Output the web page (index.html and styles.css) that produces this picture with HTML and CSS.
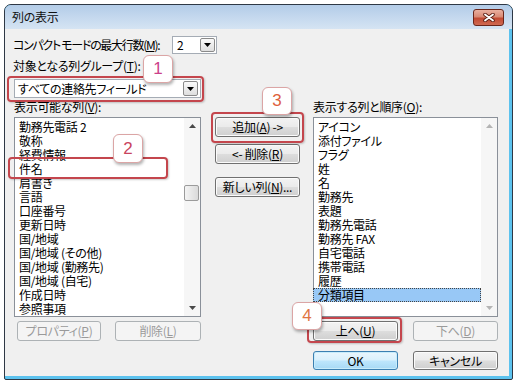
FILE: index.html
```html
<!DOCTYPE html>
<html lang="ja">
<head>
  <meta charset="UTF-8" />
  <title>列の表示</title>
  <link rel="stylesheet" href="styles.css">
</head>
<body>
  <div class="window">
    <div class="titlebar">
      <span class="title">列の表示</span>
      <span class="close">
        <svg width="12" height="9" viewBox="0 0 12 9">
          <path d="M2 1.5 L10 7.5 M10 1.5 L2 7.5" stroke="#5b1f14" stroke-width="3.6" stroke-linecap="round"/>
          <path d="M2 1.5 L10 7.5 M10 1.5 L2 7.5" stroke="#fff" stroke-width="1.8" stroke-linecap="round"/>
        </svg>
      </span>
    </div>

    <div class="client">
      <div class="row-compact">
        <span class="lbl lbl-compact">コンパクト モードの最大行数(<u>M</u>):</span>
        <div class="combo combo-small">
          <span class="combo-text">2</span>
          <span class="combo-btn"><svg width="7" height="4" viewBox="0 0 7 4"><polygon points="0,0 7,0 3.5,4" fill="#000"/></svg></span>
        </div>
      </div>
      <div class="lbl lbl-group">対象となる列グループ(<u>T</u>):</div>
      <div class="combo combo-wide">
        <span class="combo-text">すべての連絡先フィールド</span>
        <span class="combo-btn"><svg width="7" height="4" viewBox="0 0 7 4"><polygon points="0,0 7,0 3.5,4" fill="#000"/></svg></span>
      </div>

      <div class="panes">
        <div class="lbl">表示可能な列(<u>V</u>):</div>
        <div></div>
        <div class="lbl">表示する列と順序(<u>O</u>):</div>

        <div class="listbox">
          <ul class="items">
            <li>勤務先電話 2</li>
            <li>敬称</li>
            <li>経費情報</li>
            <li>件名</li>
            <li>肩書き</li>
            <li>言語</li>
            <li>口座番号</li>
            <li>更新日時</li>
            <li>国/地域</li>
            <li>国/地域 (その他)</li>
            <li>国/地域 (勤務先)</li>
            <li>国/地域 (自宅)</li>
            <li>作成日時</li>
            <li>参照事項</li>
          </ul>
          <div class="vscroll">
            <span class="arrow"><svg width="7" height="4" viewBox="0 0 7 4"><polygon points="0,4 7,4 3.5,0" fill="#4a4a4a"/></svg></span>
            <div class="track"><span class="thumb"></span></div>
            <span class="arrow"><svg width="7" height="4" viewBox="0 0 7 4"><polygon points="0,0 7,0 3.5,4" fill="#4a4a4a"/></svg></span>
          </div>
        </div>

        <div class="mid-buttons">
          <button class="btn btn-add">追加(<u>A</u>) -&gt;</button>
          <button class="btn btn-remove">&lt;- 削除(<u>R</u>)</button>
          <button class="btn btn-new">新しい列(<u>N</u>)...</button>
        </div>

        <div class="listbox">
          <ul class="items">
            <li>アイコン</li>
            <li>添付ファイル</li>
            <li>フラグ</li>
            <li>姓</li>
            <li>名</li>
            <li>勤務先</li>
            <li>表題</li>
            <li>勤務先電話</li>
            <li>勤務先 FAX</li>
            <li>自宅電話</li>
            <li>携帯電話</li>
            <li>履歴</li>
            <li class="selected">分類項目</li>
          </ul>
          <div class="vscroll">
            <span class="arrow"><svg width="7" height="4" viewBox="0 0 7 4"><polygon points="0,4 7,4 3.5,0" fill="#b4b4b4"/></svg></span>
            <div class="track"></div>
            <span class="arrow"><svg width="7" height="4" viewBox="0 0 7 4"><polygon points="0,0 7,0 3.5,4" fill="#b4b4b4"/></svg></span>
          </div>
        </div>

        <div class="btn-pair btn-pair-left">
          <button class="btn" disabled>プロパティ(<u>P</u>)</button>
          <button class="btn btn-wide" disabled>削除(<u>L</u>)</button>
        </div>
        <div></div>
        <div class="btn-pair">
          <button class="btn">上へ(<u>U</u>)</button>
          <button class="btn" disabled>下へ(<u>D</u>)</button>
        </div>

        <div></div>
        <div></div>
        <div class="btn-pair btn-pair-ok">
          <button class="btn btn-default">OK</button>
          <button class="btn">キャンセル</button>
        </div>
      </div>
    </div>
  </div>

  <!-- annotation marks drawn over the dialog -->
  <div class="mark mark-1"></div>
  <div class="mark mark-2"></div>
  <div class="mark mark-3"></div>
  <div class="mark mark-4"></div>
  <div class="callout callout-1">1</div>
  <div class="callout callout-2">2</div>
  <div class="callout callout-3">3</div>
  <div class="callout callout-4">4</div>
</body>
</html>
```

FILE: styles.css
```css
html, body {
  margin: 0;
  padding: 0;
}
body {
  position: relative;
  width: 519px;
  height: 383px;
  overflow: hidden;
  background: #fff;
  color: #000;
  font-family: "Noto Sans CJK JP", "Noto Sans", sans-serif;
  font-size: 12px;
  font-feature-settings: "palt";
  letter-spacing: -0.3px;
}
u {
  text-decoration: underline;
  text-underline-offset: 1px;
}

.window {
  margin: 4px 0 0 4px;
  width: 507px;
  height: 374px;
  border: 1px solid #2e3845;
  border-radius: 7px 7px 2px 2px;
  background: #5cc2ee;
  display: flex;
  flex-direction: column;
  overflow: hidden;
}
.titlebar {
  flex: none;
  height: 24px;
  display: flex;
  justify-content: space-between;
  align-items: flex-start;
  background: linear-gradient(#b3cce8, #d5e4f3);
}
.title {
  padding: 4px 0 0 7px;
  line-height: 15px;
  color: #111;
}
.close {
  margin: 4px 8px 0 0;
  width: 31px;
  height: 17px;
  box-sizing: border-box;
  border: 1px solid #6a261b;
  border-radius: 3px;
  background: linear-gradient(#eab0a0 0%, #d98a75 45%, #c24a33 55%, #cf6a52 100%);
  display: flex;
  align-items: center;
  justify-content: center;
}

.client {
  flex: 1;
  margin: 0 3px 3px 0;
  padding: 7px 0 0 9px;
  background: #f0f0f0;
}
.lbl {
  line-height: 14px;
  white-space: nowrap;
}
.row-compact {
  display: flex;
  align-items: center;
  height: 18px;
}
.lbl-compact {
  flex: none;
  width: 158px;
  margin-left: -1px;
  letter-spacing: -1.3px;
}
.lbl-group {
  margin-left: -1px;
  margin-top: 5px;
}

.combo {
  display: flex;
  align-items: stretch;
  box-sizing: border-box;
  padding: 1px;
  background: #fff;
  border: 1px solid #a5acb5;
}
.combo-small {
  flex: none;
  margin-left: 1px;
  width: 45px;
  height: 18px;
}
.combo-wide {
  margin-top: 6px;
  width: 187px;
  height: 19px;
}
.combo-text {
  flex: 1;
  padding-left: 2px;
  line-height: 15px;
  white-space: nowrap;
}
.combo-small .combo-text {
  padding-left: 3px;
  line-height: 14px;
}
.combo-btn {
  width: 15px;
  box-sizing: border-box;
  border: 1px solid #8a8a8a;
  border-radius: 2px;
  background: linear-gradient(#fafafa, #dedede);
  display: flex;
  align-items: center;
  justify-content: center;
}
.combo-wide .combo-btn {
  margin-right: 1px;
}

.panes {
  margin-top: 2px;
  display: grid;
  grid-template-columns: 187px 112px 185px;
}
.listbox {
  margin-top: 3px;
  height: 200px;
  box-sizing: border-box;
  border: 1px solid #8a9099;
  background: #fff;
  display: flex;
}
.items {
  flex: 1;
  margin: 0;
  padding: 2px 0 0 0;
  list-style: none;
}
.items li {
  height: 14px;
  line-height: 14px;
  padding-left: 4px;
  white-space: nowrap;
}
.items li.selected {
  background: #98c8f6;
  outline: 1px dotted #444;
  outline-offset: -1px;
  margin-left: -1px;
  padding-left: 5px;
}
.vscroll {
  width: 16px;
  display: flex;
  flex-direction: column;
  background: #f6f6f6;
}
.arrow {
  height: 16px;
  display: flex;
  align-items: center;
  justify-content: center;
}
.track {
  flex: 1;
}
.thumb {
  display: block;
  margin-top: 51px;
  width: 15px;
  height: 16px;
  box-sizing: border-box;
  border: 1px solid #9b9b9b;
  border-radius: 2px;
  background: linear-gradient(90deg, #f4f4f4, #dadada);
}

.mid-buttons {
  padding: 0 13px 0 14px;
  display: flex;
  flex-direction: column;
}
.btn-add {
  margin-top: 3px;
}
.btn-remove {
  margin-top: 7px;
}
.btn-new {
  margin-top: 13px;
}

.btn {
  width: 85px;
  height: 20px;
  box-sizing: border-box;
  padding: 0;
  border: 1px solid #707070;
  border-radius: 3px;
  background: linear-gradient(#f3f3f3 0%, #ebebeb 48%, #dddddd 52%, #cfcfcf 100%);
  box-shadow: inset 0 0 0 1px #fbfbfb;
  font-family: inherit;
  font-size: 12px;
  font-feature-settings: "palt";
  letter-spacing: -0.3px;
  line-height: 16px;
  color: #000;
  white-space: nowrap;
}
.btn:disabled {
  border-color: #adb2b5;
  background: #f4f4f4;
  box-shadow: none;
  color: #9a9a9a;
}
.btn-default {
  border-color: #3c7fb1;
  background: linear-gradient(#eaf6fd 0%, #d9f0fc 48%, #bee6fd 52%, #a7d9f5 100%);
  box-shadow: inset 0 0 0 1px #c8ecfb;
}
.btn-pair {
  margin-top: 4px;
  display: flex;
  justify-content: space-between;
}
.btn-pair-left {
  padding-left: 3px;
}
.btn-pair-left .btn {
  width: 84px;
}
.btn-pair-left .btn-wide {
  width: 86px;
}
.btn-pair-ok {
  margin-top: 10px;
}
.btn-pair-ok .btn {
  height: 19px;
}

/* annotations */
.mark {
  position: absolute;
  box-sizing: border-box;
  border: 2px solid #c4464d;
  border-radius: 4px;
  box-shadow: 1px 1px 2px rgba(0, 0, 0, 0.2);
}
.mark-1 { left: 7px; top: 76px; width: 197px; height: 26px; }
.mark-2 { left: 8px; top: 157px; width: 160px; height: 22px; }
.mark-3 { left: 211px; top: 112px; width: 93px; height: 31px; }
.mark-4 { left: 307px; top: 317px; width: 95px; height: 26px; }

.callout {
  position: absolute;
  width: 30px;
  height: 28px;
  box-sizing: border-box;
  border: 1px solid #dba5a5;
  border-radius: 6px;
  background: #fff;
  box-shadow: 1px 2px 3px rgba(0, 0, 0, 0.3);
  display: flex;
  align-items: center;
  justify-content: center;
  font-family: "Liberation Sans", Arial, sans-serif;
  font-size: 17px;
  letter-spacing: 0;
}
.callout-1 { left: 143px; top: 55px; color: #cc3f8a; }
.callout-2 { left: 113px; top: 134px; height: 29px; color: #c9445e; }
.callout-3 { left: 262px; top: 87px; color: #de5f3c; }
.callout-4 { left: 292px; top: 302px; color: #df7442; }
```
